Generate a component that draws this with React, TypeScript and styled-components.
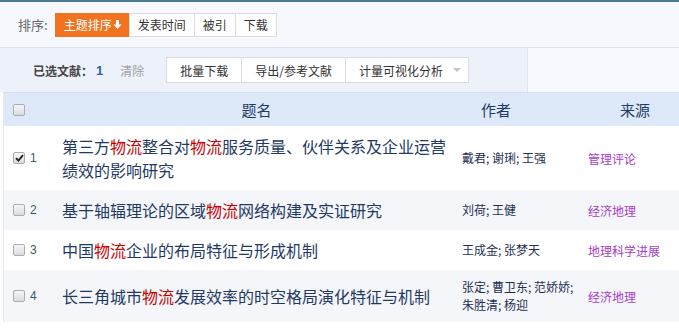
import React from 'react';
import styled, { createGlobalStyle } from 'styled-components';

const GlobalStyle = createGlobalStyle`
  body {
    margin: 0;
    background: #fff;
    font-family: "Microsoft YaHei", "Noto Sans CJK SC", "Noto Sans", sans-serif;
  }
`;

const Page = styled.div`
  width: 679px;
  height: 328px;
  overflow: hidden;
  background: #fff;
`;

const SortBar = styled.div`
  display: flex;
  align-items: center;
  height: 45px;
  padding-left: 18px;
  background: #f6f8fd;
  border-top: 2px solid #4b7c94;
  border-bottom: 1px solid #dbe3ef;
`;

const SortLabel = styled.span`
  font-size: 13px;
  color: #666;
  margin-right: 7px;
`;

const SortButton = styled.span<{ $active?: boolean }>`
  display: inline-flex;
  align-items: center;
  height: 24px;
  box-sizing: border-box;
  padding: ${p => (p.$active ? '0 6px 0 8px' : '0 8px')};
  font-size: 12px;
  color: ${p => (p.$active ? '#fff' : '#333')};
  background: ${p => (p.$active ? '#f2731f' : '#fff')};
  border: 1px solid ${p => (p.$active ? '#f2731f' : '#dcdcdc')};
  & + & {
    margin-left: -1px;
  }
`;

const Arrow = styled.svg`
  display: block;
`;

const SelectBar = styled.div`
  display: flex;
  height: 44px;
`;

const SelectInfo = styled.div`
  display: flex;
  align-items: center;
  width: 528px;
  flex-shrink: 0;
  padding-left: 33px;
  box-sizing: border-box;
  background: #edf2fa;
  border-right: 1px solid #dfe6f1;
`;

const SelectRest = styled.div`
  flex: 1;
  background: #f6f9fd;
`;

const SelectedLabel = styled.span`
  font-size: 12px;
  font-weight: bold;
  color: #444;
`;

const SelectedCount = styled.span`
  font-family: Arial, "Liberation Sans", sans-serif;
  font-size: 13px;
  font-weight: bold;
  color: #2b62a6;
  margin-left: 3px;
`;

const ClearLink = styled.span`
  font-size: 12px;
  color: #a0a0a0;
  margin-left: 17px;
`;

const ActionGroup = styled.div`
  display: flex;
  margin-left: 22px;
`;

const ActionButton = styled.span`
  display: inline-flex;
  align-items: center;
  height: 26px;
  box-sizing: border-box;
  padding: 0 13px;
  font-size: 12px;
  color: #333;
  background: #fff;
  border: 1px solid #dcdcdc;
  & + & {
    margin-left: -1px;
  }
`;

const Caret = styled.span`
  width: 0;
  height: 0;
  margin-left: 10px;
  margin-right: -6px;
  border-left: 4px solid transparent;
  border-right: 4px solid transparent;
  border-top: 4px solid #c4c4c4;
`;

const Table = styled.div`
  margin-left: 3px;
  border-left: 1px solid #e3e7ee;
`;

const HeadRow = styled.div`
  display: grid;
  grid-template-columns: 54px 397px 125px 1fr;
  align-items: center;
  height: 33px;
  background: #dde9f8;
  border-top: 1px solid #d3dfef;
  color: #1e3b68;
  font-size: 15px;
`;

const HeadCell = styled.div<{ $align?: string; $pad?: number }>`
  text-align: ${p => p.$align || 'left'};
  padding-left: ${p => p.$pad || 0}px;
`;

const Row = styled.div<{ $alt?: boolean }>`
  display: grid;
  grid-template-columns: 54px 397px 125px 1fr;
  align-items: center;
  padding: 8px 0;
  background: ${p => (p.$alt ? '#f4f6fa' : '#fff')};
`;

const IndexCell = styled.div`
  display: flex;
  align-items: center;
  padding-left: 9px;
`;

const Box = styled.span`
  display: inline-flex;
  align-items: center;
  justify-content: center;
  width: 12px;
  height: 12px;
  box-sizing: border-box;
  border: 1px solid #a9adb3;
  border-radius: 2px;
  background: linear-gradient(#f7f7f7, #d9dbde);
`;

const Num = styled.span`
  font-family: Arial, "Liberation Sans", sans-serif;
  font-size: 12px;
  color: #3b5a63;
  margin-left: 5px;
`;

const Title = styled.div`
  padding-left: 4px;
  font-size: 16px;
  line-height: 24px;
  color: #1f3a62;
`;

const Hit = styled.span`
  color: #c40000;
`;

const Authors = styled.div`
  padding-left: 7px;
  font-size: 12px;
  line-height: 18px;
  color: #1e2f50;
`;

const Source = styled.div`
  padding-left: 8px;
  font-size: 12px;
  color: #a640c6;
`;

const Check = () => (
  <svg width="9" height="8" viewBox="0 0 9 8">
    <path d="M1 4.2 L3.4 6.6 L8 1.2" fill="none" stroke="#222" strokeWidth="1.8" />
  </svg>
);

const highlight = (text: string) =>
  text.split(/(物流)/).map((part, i) =>
    part === '物流' ? <Hit key={i}>{part}</Hit> : <React.Fragment key={i}>{part}</React.Fragment>
  );

const rows = [
  {
    title: '第三方物流整合对物流服务质量、伙伴关系及企业运营绩效的影响研究',
    authors: '戴君; 谢琍; 王强',
    source: '管理评论',
    checked: true,
  },
  { title: '基于轴辐理论的区域物流网络构建及实证研究', authors: '刘荷; 王健', source: '经济地理' },
  { title: '中国物流企业的布局特征与形成机制', authors: '王成金; 张梦天', source: '地理科学进展' },
  {
    title: '长三角城市物流发展效率的时空格局演化特征与机制',
    authors: '张定; 曹卫东; 范娇娇; 朱胜清; 杨迎',
    source: '经济地理',
  },
];

export default function App() {
  return (
    <Page>
      <GlobalStyle />
      <SortBar>
        <SortLabel>排序:</SortLabel>
        <SortButton $active>
          主题排序
          <Arrow width="11" height="11" viewBox="0 0 11 11">
            <path d="M4 1 H7 V5.5 H9.5 L5.5 10 L1.5 5.5 H4 Z" fill="#fff" />
          </Arrow>
        </SortButton>
        <SortButton>发表时间</SortButton>
        <SortButton>被引</SortButton>
        <SortButton>下载</SortButton>
      </SortBar>

      <SelectBar>
        <SelectInfo>
          <SelectedLabel>已选文献：</SelectedLabel>
          <SelectedCount>1</SelectedCount>
          <ClearLink>清除</ClearLink>
          <ActionGroup>
            <ActionButton>批量下载</ActionButton>
            <ActionButton>导出/参考文献</ActionButton>
            <ActionButton>
              计量可视化分析
              <Caret />
            </ActionButton>
          </ActionGroup>
        </SelectInfo>
        <SelectRest />
      </SelectBar>

      <Table>
        <HeadRow>
          <IndexCell>
            <Box />
          </IndexCell>
          <HeadCell $align="center">题名</HeadCell>
          <HeadCell $pad={26}>作者</HeadCell>
          <HeadCell $pad={40}>来源</HeadCell>
        </HeadRow>
        {rows.map((r, i) => (
          <Row key={i} $alt={i % 2 === 1}>
            <IndexCell>
              <Box>{r.checked && <Check />}</Box>
              <Num>{i + 1}</Num>
            </IndexCell>
            <Title>{highlight(r.title)}</Title>
            <Authors>{r.authors}</Authors>
            <Source>{r.source}</Source>
          </Row>
        ))}
      </Table>
    </Page>
  );
}
